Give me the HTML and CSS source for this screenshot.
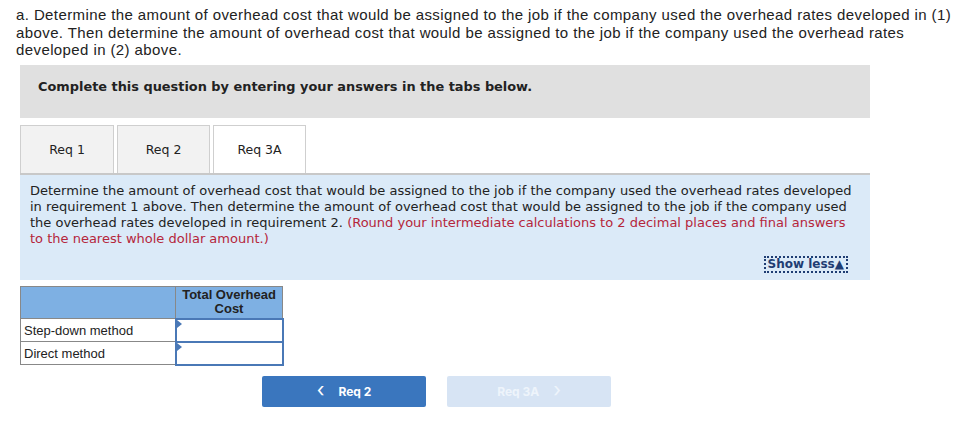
FILE: index.html
```html
<!DOCTYPE html>
<html>
<head>
<meta charset="utf-8">
<link rel="stylesheet" href="styles.css">
</head>
<body>
<p class="intro">a. Determine the amount of overhead cost that would be assigned to the job if the company used the overhead rates developed in (1) above. Then determine the amount of overhead cost that would be assigned to the job if the company used the overhead rates developed in (2) above.</p>
<div class="wrap">
  <div class="notice">Complete this question by entering your answers in the tabs below.</div>
  <div class="tabs">
    <div class="tab">Req 1</div>
    <div class="tab">Req 2</div>
    <div class="tab active">Req 3A</div>
  </div>
  <div class="panel">
    <p>Determine the amount of overhead cost that would be assigned to the job if the company used the overhead rates developed in requirement 1 above. Then determine the amount of overhead cost that would be assigned to the job if the company used the overhead rates developed in requirement 2. <span class="red">(Round your intermediate calculations to 2 decimal places and final answers to the nearest whole dollar amount.)</span></p>
    <div class="showrow"><span class="show">Show less&#9650;</span></div>
  </div>
  <table class="grid">
    <tr class="head"><th class="blank"></th><th>Total Overhead Cost</th></tr>
    <tr><td class="label">Step-down method</td><td class="input"><span class="mark"></span></td></tr>
    <tr><td class="label">Direct method</td><td class="input"><span class="mark"></span></td></tr>
  </table>
  <div class="nav">
    <div class="btn prev"><span class="chev">&lsaquo;</span><span>Req 2</span></div>
    <div class="btn next"><span>Req 3A</span><span class="chev">&rsaquo;</span></div>
  </div>
</div>
</body>
</html>
```
FILE: styles.css
```css
html, body { margin: 0; padding: 0; background: #fff; }
body { font-family: "Liberation Sans", Arial, sans-serif; color: #222; }
.intro {
  margin: 0;
  padding: 6px 16px 0 16px;
  font-size: 15px;
  line-height: 17.5px;
  letter-spacing: 0.4px;
  color: #222;
}
.wrap { padding: 6px 98px 0 20px; }
.notice {
  background: #e0e0e0;
  height: 53px;
  box-sizing: border-box;
  padding: 14px 18px;
  font-family: "DejaVu Sans", Verdana, sans-serif;
  font-weight: bold;
  font-size: 12.9px;
  color: #222;
}
.tabs { display: flex; gap: 3px; margin-top: 7px; height: 48px; }
.tab {
  width: 94px;
  box-sizing: border-box;
  background: #f2f2f2;
  border: 1px solid #cfcfcf;
  border-bottom: none;
  display: flex;
  align-items: center;
  justify-content: center;
  font-family: "DejaVu Sans", Verdana, sans-serif;
  font-size: 12.5px;
  color: #222;
}
.tab:nth-child(2) { width: 93px; }
.tab.active { background: #fff; width: 93px; }
.panel {
  background: #dbeaf8;
  border-top: 2px solid #c8c8c8;
  height: 107px;
  box-sizing: border-box;
  padding: 8px 10px 0 10px;
  font-family: "DejaVu Sans", Verdana, sans-serif;
  font-size: 13px;
  line-height: 16px;
  color: #222;
}
.panel p { margin: 0; }
.red { color: #b5263b; }
.showrow { display: flex; justify-content: flex-end; margin-top: 9px; padding-right: 12px; }
.show {
  border: 2px dotted #1f3d73;
  padding: 0 2px;
  font-weight: bold;
  font-size: 12px;
  color: #1f3d73;
  line-height: 13px;
}
.grid {
  border-collapse: collapse;
  margin-top: 6px;
  font-family: "Liberation Sans", Arial, sans-serif;
  font-size: 13px;
}
.grid th {
  background: #7eb0e3;
  border: 1px solid #888;
  font-weight: bold;
  color: #222;
  height: 31px;
  width: 106px;
  padding: 0;
  line-height: 14px;
  vertical-align: middle;
}
.grid th.blank { width: 154px; }
.grid td { border: 1px solid #888; height: 21px; padding: 0 3px; }
.grid td.input { border: 2px solid #4a78b6; position: relative; padding: 0; }
.mark {
  position: absolute; left: 0; top: 0;
  width: 0; height: 0;
  border-top: 4px solid transparent;
  border-bottom: 4px solid transparent;
  border-left: 5px solid #4a78b6;
}
.nav { display: flex; gap: 21px; margin-top: 10px; margin-left: 242px; }
.btn {
  width: 164px; height: 31px;
  border-radius: 2px;
  display: flex; align-items: center; justify-content: center; gap: 14px;
  font-family: "Inter", "Liberation Sans", sans-serif;
  font-weight: bold; font-size: 12px; color: #fff;
}
.chev { font-size: 20px; font-weight: normal; line-height: 20px; margin-top: -3px; }
.prev { background: #3a76be; }
.next { background: #d7e4f4; color: #eef4fb; }
```
